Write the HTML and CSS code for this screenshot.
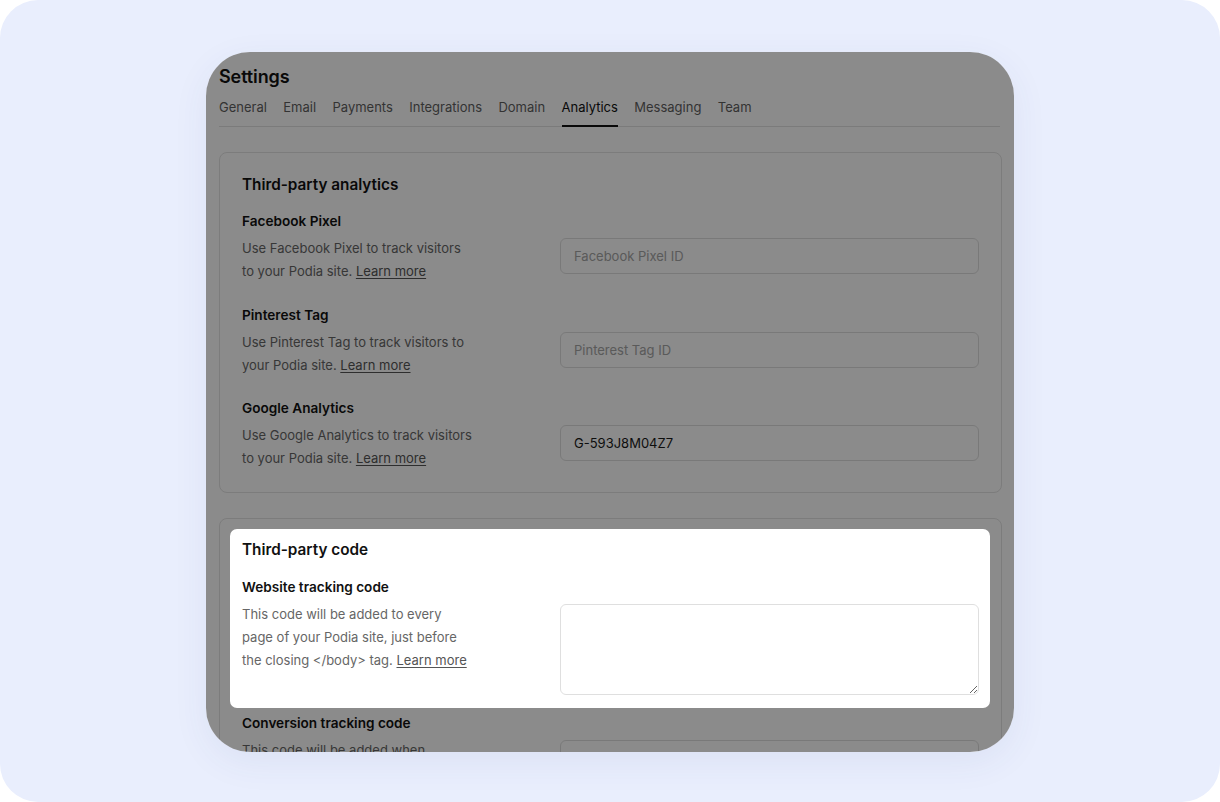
FILE: index.html
```html
<!DOCTYPE html>
<html lang="en">
<head>
<meta charset="utf-8">
<title>Settings – Analytics</title>
<link rel="stylesheet" href="styles.css">
</head>
<body>
<div class="frame">
  <div class="screen">
    <div class="page">
      <h1 class="title">Settings</h1>
      <nav class="tabs">
        <a class="tab">General</a>
        <a class="tab">Email</a>
        <a class="tab">Payments</a>
        <a class="tab">Integrations</a>
        <a class="tab">Domain</a>
        <a class="tab active">Analytics</a>
        <a class="tab">Messaging</a>
        <a class="tab">Team</a>
      </nav>

      <section class="card">
        <h2 class="card-title">Third-party analytics</h2>
        <div class="row">
          <h3 class="label">Facebook Pixel</h3>
          <p class="desc">Use Facebook Pixel to track visitors to your Podia site. <a class="link">Learn more</a></p>
          <input class="field" type="text" placeholder="Facebook Pixel ID">
        </div>
        <div class="row">
          <h3 class="label">Pinterest Tag</h3>
          <p class="desc">Use Pinterest Tag to track visitors to your Podia site. <a class="link">Learn more</a></p>
          <input class="field" type="text" placeholder="Pinterest Tag ID">
        </div>
        <div class="row">
          <h3 class="label">Google Analytics</h3>
          <p class="desc">Use Google Analytics to track visitors to your Podia site. <a class="link">Learn more</a></p>
          <input class="field" type="text" value="G-593J8M04Z7">
        </div>
      </section>

      <section class="card">
        <div class="spotlight">
          <h2 class="card-title">Third-party code</h2>
          <div class="row">
            <h3 class="label">Website tracking code</h3>
            <p class="desc">This code will be added to every page of your Podia site, just before the closing &lt;/body&gt; tag. <a class="link">Learn more</a></p>
            <textarea class="field area"></textarea>
          </div>
        </div>
        <div class="row">
          <h3 class="label">Conversion tracking code</h3>
          <p class="desc">This code will be added when someone completes a purchase on your Podia site. <a class="link">Learn more</a></p>
          <textarea class="field area"></textarea>
        </div>
      </section>
    </div>
    <div class="overlay"></div>
  </div>
</div>
</body>
</html>
```

FILE: styles.css
```css
* { box-sizing: border-box; }

html, body {
  margin: 0;
  padding: 0;
  background: #ffffff;
}

body {
  font-family: Inter, "Noto Sans", "Liberation Sans", sans-serif;
  color: #171717;
}

.frame {
  width: 1220px;
  height: 802px;
  background: #e9eefd;
  border-radius: 38px;
  display: flex;
  justify-content: center;
  align-items: flex-start;
  padding-top: 52px;
}

.screen {
  position: relative;
  width: 808px;
  height: 700px;
  background: #ffffff;
  border-radius: 44px;
  overflow: hidden;
  box-shadow: 0 10px 36px rgba(60, 72, 130, 0.07);
}

.page {
  padding: 12px 12px 0 13px;
}

.title {
  margin: 0;
  font-size: 18px;
  line-height: 26px;
  font-weight: 600;
  color: #111111;
  letter-spacing: -0.1px;
}

.tabs {
  display: flex;
  gap: 16.4px;
  margin-top: 7px;
  border-bottom: 1px solid #e2e2e2;
  margin-right: 2px;
}

.tab {
  font-size: 13px;
  line-height: 20px;
  color: #5f5f5f;
  padding: 0 0 8px;
  border-bottom: 2px solid transparent;
  margin-bottom: -1px;
}

.tab.active {
  color: #111111;
  border-bottom-color: #111111;
}

.card {
  margin-top: 25px;
  border: 1px solid #e3e3e3;
  border-radius: 8px;
  padding: 20px 22px 22px;
}

.card-title {
  margin: 0;
  font-size: 15.3px;
  line-height: 23px;
  font-weight: 600;
  color: #111111;
}

.row {
  display: grid;
  grid-template-columns: 318px 1fr;
  grid-template-rows: auto auto;
  margin-top: 16px;
}

.card > .card-title + .row {
  margin-top: 15px;
}

.row + .row {
  margin-top: 21.5px;
}

.label {
  grid-column: 1;
  grid-row: 1;
  margin: 0;
  font-size: 13.6px;
  line-height: 20px;
  font-weight: 600;
  color: #111111;
}

.desc {
  grid-column: 1;
  grid-row: 2;
  margin: 6px 0 0;
  max-width: 232px;
  font-size: 13px;
  line-height: 23px;
  color: #666666;
}

.link {
  color: #555555;
  text-decoration: underline;
  text-underline-offset: 2px;
}

.field {
  grid-column: 2;
  grid-row: 2;
  align-self: start;
  margin-top: 7px;
  width: 100%;
  height: 36px;
  border: 1px solid #dfdfdf;
  border-radius: 6px;
  background: #ffffff;
  padding: 0 13px;
  font-family: inherit;
  font-size: 13px;
  color: #1a1a1a;
  outline: none;
}

.field::placeholder {
  color: #a5a5a5;
}

.area {
  height: 91px;
  resize: vertical;
  display: block;
}

.spotlight {
  position: relative;
  z-index: 2;
  background: #ffffff;
  border-radius: 7px;
  margin: -10px -11px 5px -12px;
  padding: 9px 11px 13px 12px;
}

.spotlight + .row {
  margin-top: 0;
}

.overlay {
  position: absolute;
  inset: 0;
  z-index: 1;
  background: rgba(0, 0, 0, 0.455);
  pointer-events: none;
}
```
